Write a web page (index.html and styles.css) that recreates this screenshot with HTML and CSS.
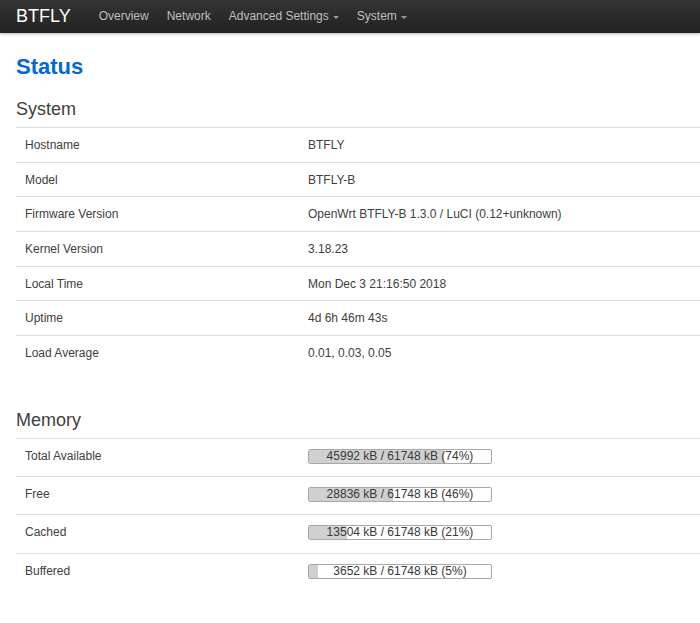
FILE: index.html
```html
<!DOCTYPE html>
<html>
<head>
<meta charset="utf-8">
<title>BTFLY - Status</title>
<link rel="stylesheet" href="styles.css">
</head>
<body>
<header class="topbar">
  <a class="brand">BTFLY</a>
  <nav class="nav">
    <a class="nav-link">Overview</a>
    <a class="nav-link">Network</a>
    <a class="nav-link">Advanced Settings<span class="caret"></span></a>
    <a class="nav-link">System<span class="caret"></span></a>
  </nav>
</header>
<main class="content">
  <h2 class="page-title">Status</h2>

  <h3 class="section-title">System</h3>
  <div class="table">
    <div class="row"><div class="label">Hostname</div><div class="value">BTFLY</div></div>
    <div class="row"><div class="label">Model</div><div class="value">BTFLY-B</div></div>
    <div class="row"><div class="label">Firmware Version</div><div class="value">OpenWrt BTFLY-B 1.3.0 / LuCI (0.12+unknown)</div></div>
    <div class="row"><div class="label">Kernel Version</div><div class="value">3.18.23</div></div>
    <div class="row"><div class="label">Local Time</div><div class="value">Mon Dec 3 21:16:50 2018</div></div>
    <div class="row"><div class="label">Uptime</div><div class="value">4d 6h 46m 43s</div></div>
    <div class="row"><div class="label">Load Average</div><div class="value">0.01, 0.03, 0.05</div></div>
  </div>

  <h3 class="section-title memory-title">Memory</h3>
  <div class="table mem">
    <div class="row"><div class="label">Total Available</div><div class="value"><div class="bar"><div class="fill" style="width:74%"></div><span class="bar-text">45992 kB / 61748 kB (74%)</span></div></div></div>
    <div class="row"><div class="label">Free</div><div class="value"><div class="bar"><div class="fill" style="width:46%"></div><span class="bar-text">28836 kB / 61748 kB (46%)</span></div></div></div>
    <div class="row"><div class="label">Cached</div><div class="value"><div class="bar"><div class="fill" style="width:21%"></div><span class="bar-text">13504 kB / 61748 kB (21%)</span></div></div></div>
    <div class="row"><div class="label">Buffered</div><div class="value"><div class="bar"><div class="fill" style="width:5%"></div><span class="bar-text">3652 kB / 61748 kB (5%)</span></div></div></div>
  </div>
</main>
</body>
</html>
```

FILE: styles.css
```css
html, body {
  margin: 0;
  padding: 0;
  background: #fff;
  font-family: "Liberation Sans", Arial, Helvetica, sans-serif;
  color: #404040;
}

.topbar {
  height: 33px;
  display: flex;
  align-items: center;
  background: linear-gradient(#343434, #222);
  box-shadow: 0 1px 3px rgba(0, 0, 0, 0.3);
  padding-left: 16px;
  box-sizing: border-box;
}

.brand {
  color: #fff;
  font-size: 18px;
  line-height: 31px;
  padding-right: 19px;
}

.nav {
  display: flex;
  align-items: center;
}

.nav-link {
  color: #bfbfbf;
  font-size: 12px;
  line-height: 31px;
  padding: 0 9px;
  display: flex;
  align-items: center;
}

.caret {
  display: inline-block;
  width: 0;
  height: 0;
  margin-left: 4px;
  margin-top: 1px;
  border-left: 3px solid transparent;
  border-right: 3px solid transparent;
  border-top: 3px solid #999;
}

.content {
  padding-left: 16px;
}

.page-title {
  margin: 21px 0 0;
  font-size: 22px;
  line-height: 26px;
  font-weight: bold;
  color: #0069d6;
}

.section-title {
  margin: 18px 0 7px;
  font-size: 18px;
  line-height: 22px;
  font-weight: normal;
  color: #404040;
}

.memory-title {
  margin-top: 39px;
}

.table {
  display: flex;
  flex-direction: column;
}

.row {
  display: flex;
  align-items: flex-start;
  border-top: 1px solid #ddd;
  height: 34.67px;
  box-sizing: border-box;
  font-size: 12px;
  line-height: 17.67px;
}

.label {
  width: 292px;
  box-sizing: border-box;
  padding: 9px 9px 7px;
}

.value {
  padding: 9px 0 7px;
}

.mem .row {
  height: 38.4px;
}

.mem .value {
  padding: 10px 0 0;
}

.bar {
  position: relative;
  width: 184px;
  height: 15px;
  box-sizing: border-box;
  border: 1px solid #a8a8a8;
  border-radius: 2px;
  background: #fff;
  overflow: hidden;
}

.fill {
  height: 100%;
  background: #d0d0d0;
}

.bar-text {
  position: absolute;
  left: 0;
  right: 0;
  top: 0;
  text-align: center;
  font-size: 12px;
  line-height: 13px;
  color: #383838;
}
```
